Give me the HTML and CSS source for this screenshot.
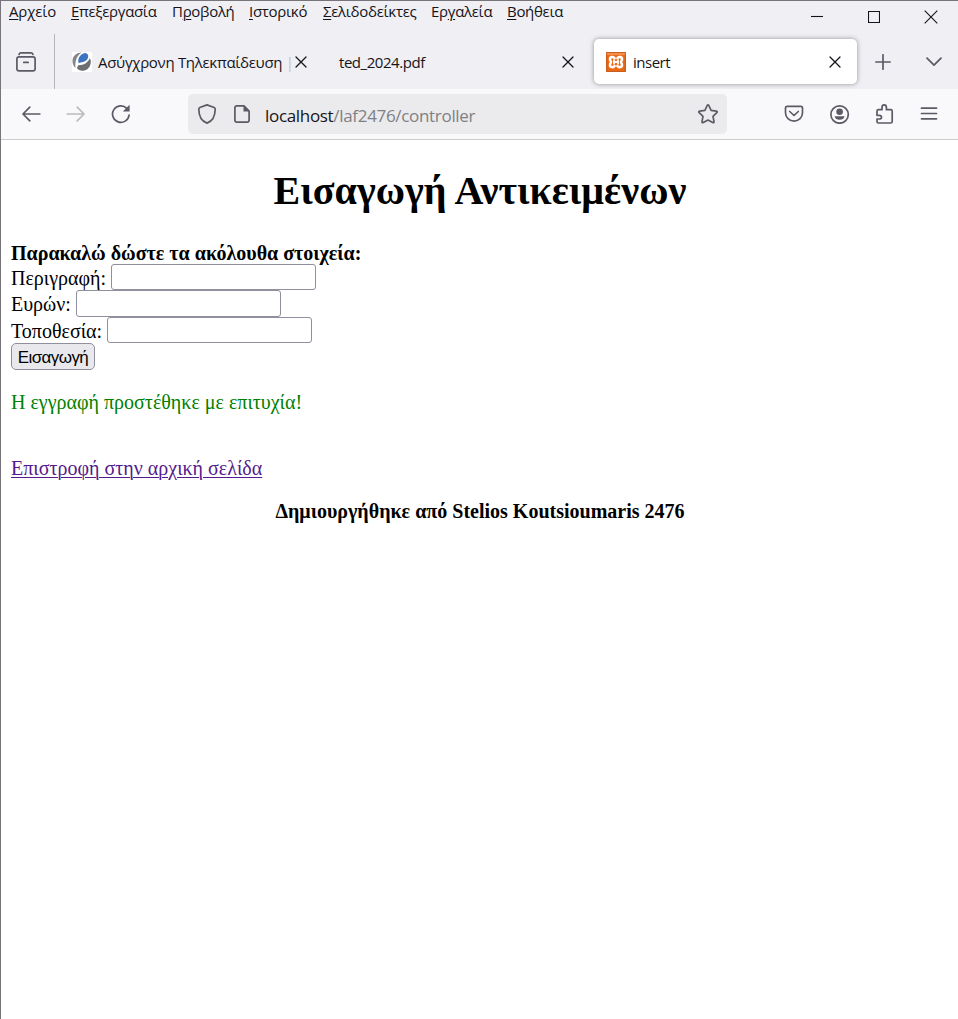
FILE: index.html
```html
<!DOCTYPE html>
<html lang="el">
<head>
<meta charset="utf-8">
<title>insert</title>
<link rel="stylesheet" href="styles.css">
</head>
<body>
<div class="window">
  <header class="titlebar">
    <nav class="menu">
      <span class="m1"><u>Α</u>ρχείο</span><span class="m2"><u>Ε</u>πεξεργασία</span><span class="m3">Π<u>ρ</u>οβολή</span><span class="m4"><u>Ι</u>στορικό</span><span class="m5"><u>Σ</u>ελιδοδείκτες</span><span class="m6">Ερ<u>γ</u>αλεία</span><span class="m7"><u>Β</u>οήθεια</span>
    </nav>
    <div class="controls">
      <svg width="12" height="12" viewBox="0 0 12 12"><path d="M0 5.5h12"/></svg>
      <svg width="12" height="12" viewBox="0 0 12 12"><path d="M.5.5h11v11H.5z"/></svg>
      <svg width="14" height="14" viewBox="0 0 14 14"><path d="M.7.7l12.6 12.6M13.3.7.7 13.3"/></svg>
    </div>
  </header>

  <div class="tabs">
    <div class="view">
      <svg width="20" height="20" viewBox="0 0 20 20"><rect x=".9" y="4.9" width="18.2" height="14" rx="2.2"/><path d="M3 2.4Q3.500.9 5 .9h10q1.500 0 2 1.500M7.800 10.400h4.400"/></svg>
    </div>
    <div class="tab">
      <svg class="fav" width="20" height="20" viewBox="0 0 20 20"><rect width="20" height="20" fill="#fff"/><path d="M9.500.5C4 .5.200 4.500.5 9.500c.2 3 1.300 5 3 6.500C3 10 4 4.500 9.500.5z" fill="#85878a"/><path d="M6.500 11C5.500 6 8.500 1.500 13 .9c4 .4 4 4.600 1.700 7.100C12.500 10.300 9.500 10.300 6.500 11z" fill="#3d74c2"/><path d="M6 13.200C11 13.500 16 11 17.900 6c1.700 3.500 1.100 8.500-2.900 11.500-4 2.300-8.500 1.300-10-1.200z" fill="#6c6e70"/></svg>
      <span class="title t1">Ασύγχρονη Τηλεκπαίδευση <i>|</i></span>
      <svg class="close" width="12" height="12" viewBox="0 0 12 12"><path d="M1 1l10 10M11 1 1 11"/></svg>
    </div>
    <div class="tab">
      <span class="title t2">ted_2024.pdf</span>
      <svg class="close" width="12" height="12" viewBox="0 0 12 12"><path d="M1 1l10 10M11 1 1 11"/></svg>
    </div>
    <div class="tab active">
      <svg class="fav" width="20" height="20" viewBox="0 0 20 20"><rect x=".5" y=".5" width="19" height="19" rx="1.500" fill="#ed6b16" stroke="#c8601c"/><path d="M1.500 2h17" stroke="#f49a60" stroke-width="1.500"/><path d="M8.600 6.200C7.500 4.500 4 4.500 4 7.200c0 1.500 1 1.700 1 2.800s-1 1.300-1 2.800c0 2.900 3.500 2.900 4.600 1.200M11.400 6.200c1.100-1.700 4.600-1.700 4.600 1 0 1.500-1 1.700-1 2.800s1 1.300 1 2.800c0 2.900-3.500 2.900-4.600 1.200" fill="none" stroke="#fff" stroke-width="2.500"/><path d="M8 8.200v3.600M12 8.200v3.600M8 10h4" fill="none" stroke="#fff" stroke-width="1.800"/></svg>
      <span class="title t3">insert</span>
      <svg class="close" width="12" height="12" viewBox="0 0 12 12"><path d="M1 1l10 10M11 1 1 11"/></svg>
    </div>
    <svg class="plus" width="16" height="16" viewBox="0 0 16 16"><path d="M8 .8v14.400M.8 8h14.400"/></svg>
    <svg class="chev" width="16" height="10" viewBox="0 0 16 10"><path d="M1 1.200l7 7 7-7"/></svg>
  </div>

  <div class="toolbar">
    <svg class="back" width="20" height="18" viewBox="0 0 20 18"><path d="M8.800 2.200 2 9l6.800 6.800M2.300 9h16.500"/></svg>
    <svg class="fwd" width="20" height="18" viewBox="0 0 20 18"><path d="M11.200 2.200 18 9l-6.800 6.800M17.700 9H1.200"/></svg>
    <svg class="reload" width="20" height="20" viewBox="0 0 20 20"><path d="M15.800 4.300A8.300 8.300 0 1 0 18.100 11"/><path class="solid" d="M18.600.8v6.600h-6.800z"/></svg>
    <div class="url">
      <svg width="20" height="20" viewBox="0 0 20 20"><path d="M10 .9 17.200 3.500q1 .4 1 1.500C18.200 12 15 17.300 10 19.100 5 17.300 1.800 12 1.800 5q0-1.100 1-1.500z"/></svg>
      <svg class="doc" width="16" height="18" viewBox="0 0 16 18"><path d="M10 .9H3Q.9.9.9 3v12Q.9 17.100 3 17.100h10q2.100 0 2.100-2.100V6z"/><path class="solid" d="M9.500.5v6h6z"/></svg>
      <span class="address"><b>localhost</b>/laf2476/controller</span>
      <svg class="star" width="20" height="20" viewBox="0 0 20 20"><path d="M9.200 1.500q.8-1.300 1.600 0l2.300 4.900 5.200.7q1.500.3.500 1.500L15 12.300l1 5.300q.1 1.500-1.300.9L10 16l-4.700 2.500q-1.400.6-1.300-.9l1-5.300L1.200 8.600q-1-1.200.5-1.500l5.200-.7z"/></svg>
    </div>
    <div class="tools">
      <svg width="20" height="20" viewBox="0 0 20 20"><path d="M3.200 2.400h13.600q1.700 0 1.700 1.900v4.500a8.500 8.300 0 0 1-17 0V4.300q0-1.900 1.700-1.900zM5.700 7.500 10 11.500l4.300-4"/></svg>
      <svg class="account" width="20" height="20" viewBox="0 0 20 20"><circle cx="9.600" cy="10.500" r="8.700"/><circle class="solid" cx="9.600" cy="7.800" r="3.300"/><path class="solid" d="M4.600 12.300h10q-.8 3.500-5 3.500t-5-3.500z"/></svg>
      <svg width="20" height="20" viewBox="0 0 20 20"><path d="M2 11.500V7.200q0-1.500 1.500-1.500H7V3.500q0-2.600 2.200-2.600t2.200 2.600v2.200h4.300q1.500 0 1.500 1.500v10.300q0 1.500-1.500 1.500H3.500Q2 19 2 17.500V15h2.200q2.300 0 2.300-1.800t-2.300-1.800z"/></svg>
      <svg class="burger" width="20" height="20" viewBox="0 0 20 20"><path d="M2.500 4.200h15M2.500 9.500h15M2.500 14.800h15"/></svg>
    </div>
  </div>

  <main class="page">
    <h1>Εισαγωγή Αντικειμένων</h1>
    <form>
      <b class="prompt">Παρακαλώ δώστε τα ακόλουθα στοιχεία:</b>
      <label class="row"><span>Περιγραφή:</span><input type="text"></label>
      <label class="row second"><span>Ευρών:</span><input type="text"></label>
      <label class="row"><span>Τοποθεσία:</span><input type="text"></label>
      <button type="button">Εισαγωγή</button>
    </form>
    <p class="ok">Η εγγραφή προστέθηκε με επιτυχία!</p>
    <a href="#">Επιστροφή στην αρχική σελίδα</a>
    <h4>Δημιουργήθηκε από Stelios Koutsioumaris 2476</h4>
  </main>
</div>
</body>
</html>
```
FILE: styles.css
```css
* { box-sizing: border-box; }
body { margin: 0; background: #fff; }
.window {
  height: 1019px;
  border-top: 1px solid #777579;
  border-left: 1px solid #777579;
  overflow: hidden;
  font-family: "Open Sans", "Noto Sans", sans-serif;
  color: #15141a;
}
svg { display: block; flex: none; fill: none; stroke: #5b5b66; stroke-width: 1.700; stroke-linecap: round; stroke-linejoin: round; }
.solid { fill: #5b5b66; stroke: none; }

.titlebar { display: flex; justify-content: space-between; height: 33px; background: #f0eff4; }
.menu { display: flex; padding-left: 8px; font-size: 15px; line-height: 21px; letter-spacing: -.3px; white-space: nowrap; }
.menu u { text-underline-offset: 2px; text-decoration-thickness: 1px; }
.m1 { width: 62px; letter-spacing: -.15px; }
.m2 { width: 101px; }
.m3 { width: 77px; }
.m4 { width: 74px; }
.m5 { width: 108px; }
.m6 { width: 76px; }
.controls { display: flex; align-items: center; height: 31px; gap: 44px; padding-right: 20px; }
.controls svg { stroke: #15141a; stroke-width: 1.100; stroke-linecap: butt; }
.controls svg:first-child { margin-right: 1px; }

.tabs { display: flex; align-items: center; height: 55px; background: #f0eff4; }
.view { display: flex; align-items: center; width: 54px; height: 55px; margin-right: 1px; padding-left: 15px; border-right: 1px solid #b7b6bc; }
.tab { display: flex; align-items: center; width: 263px; height: 45px; margin-left: 4px; padding: 0 16px 0 12px; border-radius: 5px; }
.active { background: #fff; box-shadow: 0 0 5px rgba(0, 0, 0, .4); }
.fav { margin-right: 7px; stroke: none; }
.title { flex: 1; min-width: 0; font-size: 15px; white-space: nowrap; }
.title i { font-style: normal; color: #c4c3c8; }
.t1 { margin-left: -1px; letter-spacing: -.3px; }
.t2 { letter-spacing: -.45px; }
.t3 { letter-spacing: -.5px; }
.close { stroke: #15141a; stroke-width: 1.300; }
.plus { margin-left: 18px; }
.chev { margin-left: 35px; }

.toolbar { display: flex; align-items: center; height: 51px; padding-left: 20px; background: #f9f9fb; border-bottom: 1px solid #ccc; }
.fwd { margin-left: 25px; stroke: #bbbac0; }
.reload { margin-left: 25px; }
.url { display: flex; align-items: center; width: 539px; height: 40px; margin-left: 57px; padding: 0 9px; border-radius: 5px; background: #ebebed; }
.doc { margin-left: 17px; }
.address { flex: 1; margin-left: 15px; padding-top: 3px; font-size: 17px; letter-spacing: -.32px; color: #808084; }
.address b { font-weight: 400; color: #15141a; }
.tools { display: flex; gap: 25px; margin-left: 57px; }
.account { margin-left: 1px; }
.burger { margin-left: -1px; }

.page { padding: 0 8px 0 9px; font: 20px/22px "Liberation Serif", serif; color: #000; }
h1 { margin: 28px 0; font-size: 40px; line-height: 46px; letter-spacing: .07px; text-align: center; }
form { display: flex; flex-direction: column; align-items: flex-start; padding-left: 1px; }
.prompt { height: 22px; }
.row { display: flex; align-items: center; gap: 5px; height: 26px; white-space: nowrap; }
.row span { padding-top: 1px; }
.second, .second input { height: 27px; }
input { width: 205px; height: 26px; border: 1px solid #8f8f9d; border-radius: 3px; background: #fff; }
button { width: 84px; height: 27px; padding: 2px 0 0; border: 1px solid #8f8f9d; border-radius: 5px; background: #e9e9ed; color: #000; font: 17px "Liberation Sans", sans-serif; letter-spacing: -.6px; }
.ok { margin: 21px 0 44px 1px; color: green; }
a { margin-left: 1px; color: #551a8b; text-decoration-thickness: 1px; text-underline-offset: 2px; }
h4 { margin: 21px 0; font-size: 20px; text-align: center; }
```
